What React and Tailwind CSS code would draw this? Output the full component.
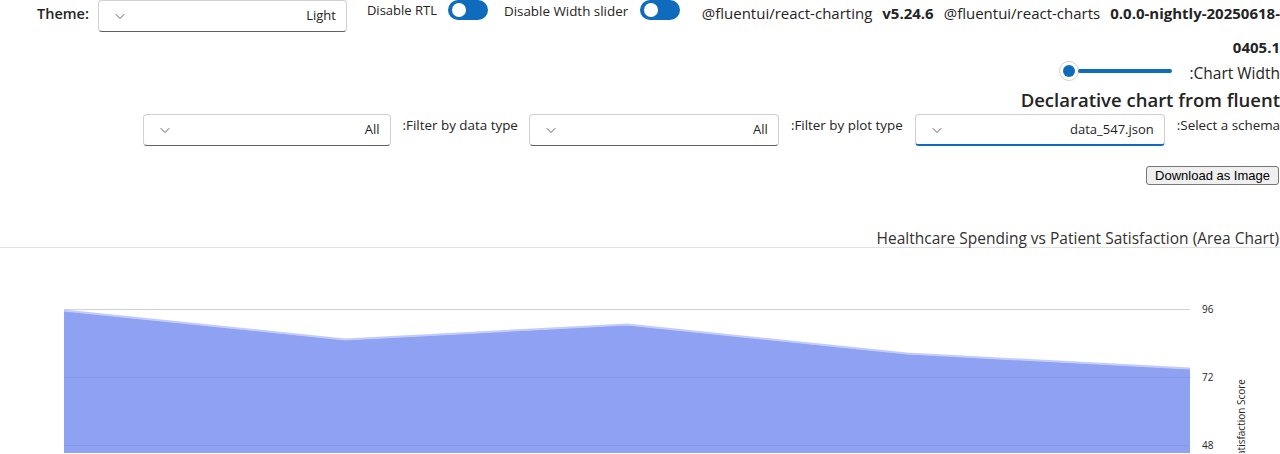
import React from 'react';

const font = { fontFamily: '"Open Sans", "Noto Sans", sans-serif' };

const Chevron = () => (
  <svg width="14" height="14" viewBox="0 0 14 14" className="text-[#616161]">
    <path d="M3 5.5 7 9.5l4-4" fill="none" stroke="currentColor" strokeWidth="1" strokeLinecap="round" strokeLinejoin="round" />
  </svg>
);

const Dropdown = ({ value, width = 'w-[249px]', focused = false }) => (
  <div
    className={`${width} h-[32px] flex items-center justify-between pl-[14px] pr-[10px] bg-white rounded-[4px] border border-[#d1d1d1] ${
      focused ? 'border-b-2 border-b-[#0f6cbd]' : 'border-b-[#616161]'
    }`}
  >
    <Chevron />
    <span className="text-[13px] text-[#242424]">{value}</span>
  </div>
);

const Toggle = () => (
  <div className="w-[40px] h-[20px] rounded-full bg-[#0f6cbd] flex items-center pl-[4px]">
    <div className="w-[14px] h-[14px] rounded-full bg-white" />
  </div>
);

const AreaChart = () => {
  const pts = [
    [64, 312],
    [345, 341],
    [627, 326],
    [907, 355],
    [1190, 370],
  ];
  const line = pts.map((p) => p.join(',')).join(' ');
  const area = `64,454 ${line} 1190,454`;
  return (
    <svg width="1280" height="205" viewBox="0 249 1280 205" className="block">
      <line x1="64" x2="1190" y1="310.5" y2="310.5" stroke="#d2d2d2" />
      <polygon points={area} fill="#8fa1f3" />
      <polyline points={line} fill="none" stroke="#c3cbf8" strokeWidth="2" transform="translate(0,-0.5)" />
      <line x1="64" x2="1190" y1="378.5" y2="378.5" stroke="#7f8fe6" strokeOpacity="0.5" />
      <line x1="64" x2="1190" y1="446.5" y2="446.5" stroke="#7f8fe6" strokeOpacity="0.5" />
      <g fontSize="10" fill="#242424" style={font}>
        <text x="1202" y="314">96</text>
        <text x="1202" y="382">72</text>
        <text x="1202" y="450">48</text>
        <text x="1245" y="380" textAnchor="end" transform="rotate(-90 1245 380)" fontSize="10">
          Patient Satisfaction Score
        </text>
      </g>
    </svg>
  );
};

export default function App() {
  return (
    <div className="w-[1280px] h-[454px] overflow-hidden bg-white text-[#242424]" style={font}>
      {/* top controls */}
      <div className="flex items-start h-[32px]">
        <span className="ml-[37px] mt-[3px] text-[14.5px] font-semibold">Theme:</span>
        <div className="ml-[9px]">
          <Dropdown value="Light" />
        </div>
        <span className="ml-[20px] mt-[1px] text-[13px]">Disable RTL</span>
        <div className="ml-[11px]">
          <Toggle />
        </div>
        <span className="ml-[16px] mt-[1px] text-[13.4px]">Disable Width slider</span>
        <div className="ml-[12px]">
          <Toggle />
        </div>
        <div className="flex-1 mt-[2px] text-[15px] text-right whitespace-nowrap">
          <span>@fluentui/react-charting</span>
          <span className="ml-[10px] font-bold">v5.24.6</span>
          <span className="ml-[10px]">@fluentui/react-charts</span>
          <span className="ml-[10px] font-bold">0.0.0-nightly-20250618-</span>
        </div>
      </div>
      <div className="text-right text-[15px] font-bold h-[26px] leading-[26px] mt-[2px]">0405.1</div>

      {/* chart width slider */}
      <div className="flex justify-end items-center h-[28px]">
        <div className="flex items-center mt-[-6px]">
          <div className="w-[20px] h-[20px] rounded-full border border-[#d1d1d1] bg-white flex items-center justify-center">
            <div className="w-[12px] h-[12px] rounded-full bg-[#0f6cbd]" />
          </div>
          <div className="w-[94px] h-[4px] bg-[#0f6cbd] rounded-full -ml-[1px]" />
        </div>
        <span className="ml-[17px] text-[15.5px] font-medium">:Chart Width</span>
      </div>

      <div className="text-right text-[18.5px] font-semibold leading-[24px] h-[24px]">Declarative chart from fluent</div>

      {/* filters */}
      <div className="flex justify-end items-start mt-[2px] gap-[12px]">
        <Dropdown value="All" width="w-[248px]" />
        <span className="text-[13.4px] mt-[1px] mr-[-1px]">:Filter by data type</span>
        <Dropdown value="All" width="w-[250px]" />
        <span className="text-[13.4px] mt-[1px]">:Filter by plot type</span>
        <Dropdown value="data_547.json" width="w-[250px]" focused />
        <span className="text-[13.4px] mt-[1px]">:Select a schema</span>
      </div>

      <div className="flex justify-end mt-[20px] pr-[1px]">
        <button
          className="h-[19px] px-[8px] text-[13px] leading-[17px] bg-[#efefef] border border-[#767676] rounded-[3px] text-black"
          style={{ fontFamily: '"Liberation Sans", Arial, sans-serif' }}
        >
          Download as Image
        </button>
      </div>

      {/* chart title */}
      <div className="mt-[43px] border-b border-[#e1e1e1] h-[20px] text-right pr-[1px] text-[15.5px] leading-[20px] text-[#323130]">
        Healthcare Spending vs Patient Satisfaction (Area Chart)
      </div>

      <AreaChart />
    </div>
  );
}
